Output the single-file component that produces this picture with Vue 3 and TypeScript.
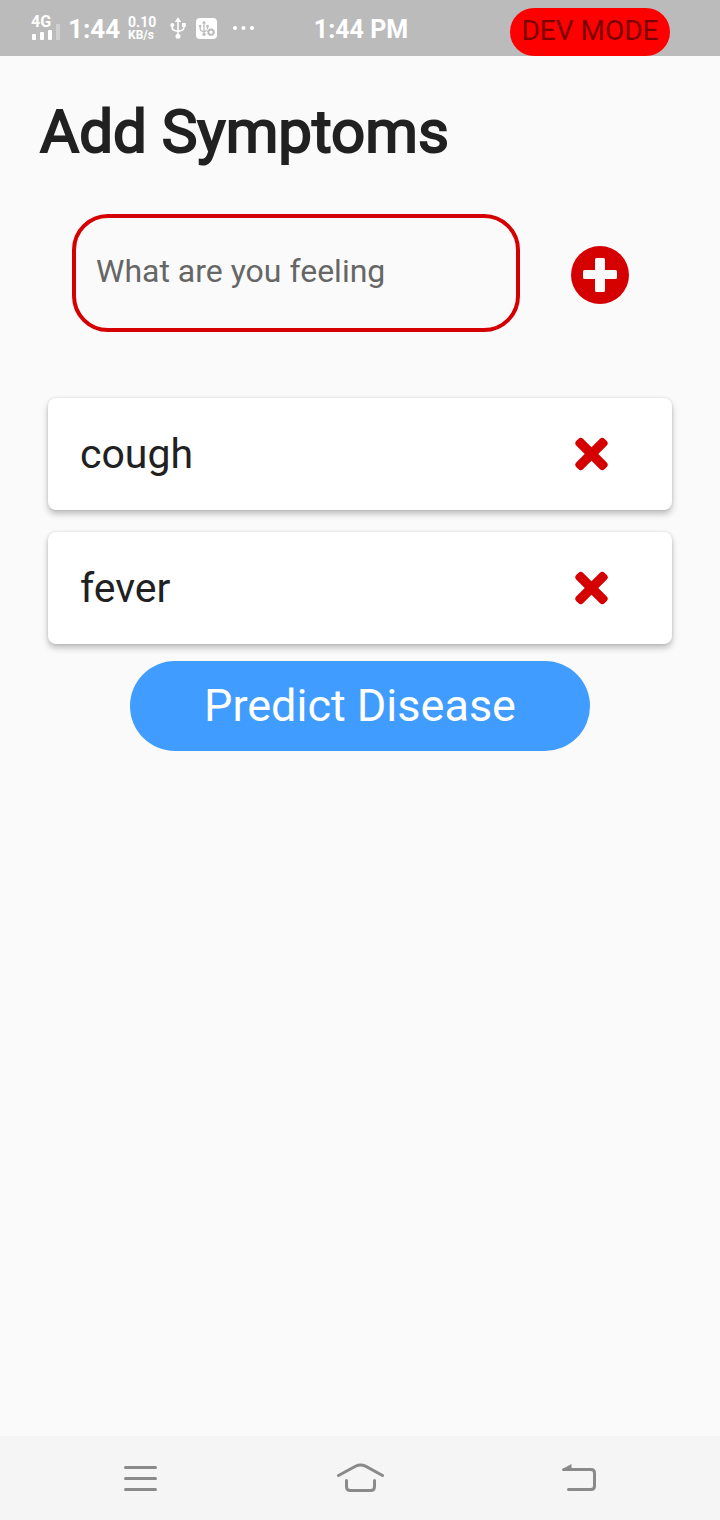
<script setup lang="ts">
import { ref } from 'vue'

const draft = ref('')
const symptoms = ref<string[]>(['cough', 'fever'])

function addSymptom(): void {
  const value = draft.value.trim()
  if (value) {
    symptoms.value.push(value)
    draft.value = ''
  }
}

function removeSymptom(index: number): void {
  symptoms.value.splice(index, 1)
}
</script>

<template>
  <div class="screen">
    <header class="status">
      <div class="status-left">
        <div class="signal">
          <span class="network">4G</span>
          <svg width="29" height="11" viewBox="0 0 29 11" fill="#fff" aria-hidden="true">
            <rect x="1" y="5" width="4" height="6" rx="1" />
            <rect x="9" y="3" width="4" height="8" rx="1" />
            <rect x="17" y="1" width="4" height="10" rx="1" />
          </svg>
          <span class="weak-bar"></span>
        </div>
        <span class="clock">1:44</span>
        <div class="rate"><span>0.10</span><span class="unit">KB/s</span></div>
        <svg class="usb" width="16" height="22" viewBox="0 0 16 22" fill="none" stroke="#fff" stroke-width="1.6" aria-hidden="true">
          <path d="M8 4V19M2.200 8v2.500q0 2.500 2.500 3L8 14.500l3.300-1q2.500-.5 2.500-3V8" />
          <path d="M8 0l3.200 5H4.800z" fill="#fff" stroke="none" />
          <circle cx="2.300" cy="8" r="2" fill="#fff" stroke="none" />
          <path d="M12 6h3.800v4H12z" fill="#fff" stroke="none" />
          <circle cx="8" cy="19.200" r="2.500" fill="#fff" stroke="none" />
        </svg>
        <svg class="usb-box" width="21" height="21" viewBox="0 0 21 21" fill="none" aria-hidden="true">
          <rect width="21" height="21" rx="4" fill="#fff" />
          <g stroke="#bbb" stroke-width="1.300">
            <path d="M8 4v12.500M4.200 8v3q0 1.500 1.500 2L8 13.800l2-.8q1.500-.5 1.500-2V8" />
            <path d="M8 2.500l2 3H6z" fill="#bbb" stroke="none" />
            <circle cx="4.200" cy="8" r="1.200" fill="#bbb" stroke="none" />
            <path d="M10.400 6.800h2.300v2.400h-2.300z" fill="#bbb" stroke="none" />
            <circle cx="8" cy="16.300" r="1.600" fill="#bbb" stroke="none" />
            <circle cx="15" cy="14.200" r="4.600" fill="#fff" stroke="none" />
            <circle cx="15" cy="14.200" r="2.500" stroke-width="1.800" />
            <circle cx="15" cy="14.200" r="3.600" stroke-width="1" stroke-dasharray="1.400 1.427" />
          </g>
        </svg>
        <svg class="dots" width="22" height="4" viewBox="0 0 22 4" fill="#fff" aria-hidden="true">
          <circle cx="2" cy="2" r="2" />
          <circle cx="10.500" cy="2" r="2" />
          <circle cx="19" cy="2" r="2" />
        </svg>
      </div>
      <span class="time">1:44 PM</span>
      <div class="status-right"><span class="dev">DEV MODE</span></div>
    </header>

    <main class="content">
      <h1>Add Symptoms</h1>
      <form class="entry" @submit.prevent="addSymptom">
        <input v-model="draft" type="text" placeholder="What are you feeling" aria-label="What are you feeling" />
        <button class="add" type="submit" aria-label="Add symptom">
          <svg width="58" height="58" viewBox="0 0 58 58" aria-hidden="true">
            <circle cx="29" cy="29" r="29" fill="#d50000" />
            <path d="M25.500 12h7q1.500 0 1.500 1.500V24h10.500q1.500 0 1.500 1.500v6q0 1.500-1.500 1.500H34v11.500q0 1.500-1.500 1.500h-7q-1.500 0-1.500-1.500V33H13.500q-1.500 0-1.500-1.500v-6q0-1.500 1.500-1.500H24V13.500q0-1.500 1.500-1.500z" fill="#fafafa" />
          </svg>
        </button>
      </form>

      <ul class="list">
        <li v-for="(symptom, index) in symptoms" :key="index" class="card">
          <span>{{ symptom }}</span>
          <button class="remove" type="button" :aria-label="`Remove ${symptom}`" @click="removeSymptom(index)">
            <svg width="34" height="34" viewBox="0 0 34 34" fill="#d50000" aria-hidden="true">
              <g transform="rotate(45 16.500 17)">
                <rect x="-3.500" y="12.200" width="40" height="9.600" rx="3.500" />
                <rect x="11.700" y="-3" width="9.600" height="40" rx="3.500" />
              </g>
            </svg>
          </button>
        </li>
      </ul>
      <button class="predict" type="button">Predict Disease</button>
    </main>

    <nav class="nav" aria-label="System navigation">
      <button type="button" aria-label="Recent apps">
        <svg width="48" height="32" viewBox="0 0 48 32" fill="none" stroke="#8a8a8a" stroke-width="3" stroke-linecap="round" aria-hidden="true">
          <path d="M9.500 5.500h30M9.500 16.500h30M9.500 27.500h30" />
        </svg>
      </button>
      <button type="button" aria-label="Home">
        <svg width="48" height="32" viewBox="0 0 48 32" fill="none" stroke="#8a8a8a" stroke-width="3" stroke-linecap="round" aria-hidden="true">
          <path d="M2.500 13.500L19.500 4.200q5-2.600 10 0l17 9.300M10.500 18.500v6q0 4 4 4h20q4 0 4-4v-6" />
        </svg>
      </button>
      <button type="button" aria-label="Back">
        <svg width="48" height="32" viewBox="0 0 48 32" fill="none" stroke="#8a8a8a" stroke-width="3" stroke-linecap="round" aria-hidden="true">
          <path d="M8 7.500h27q3.500 0 3.500 3.500v13q0 3.500-3.500 3.500H12.500" />
          <path d="M6 8.500v-1.300L15.500 2v6z" fill="#8a8a8a" stroke="none" />
        </svg>
      </button>
    </nav>
  </div>
</template>

<style>
body {
  margin: 0;
  background: #fafafa;
}
</style>

<style scoped>
.screen {
  display: flex;
  flex-direction: column;
  min-height: 100vh;
  background: #fafafa;
  color: #212121;
  font-family: Roboto, "Liberation Sans", sans-serif;
}

button {
  padding: 0;
  border: 0;
  background: none;
  font: inherit;
  cursor: pointer;
}

svg {
  display: block;
}

.status {
  display: grid;
  grid-template-columns: 1fr auto 1fr;
  align-items: center;
  height: 56px;
  background: #bbb;
  color: #fff;
}

.status-left {
  display: flex;
  align-items: center;
  padding-left: 31px;
}

.signal {
  position: relative;
  width: 29px;
  padding-bottom: 2px;
}

.network {
  display: block;
  font-size: 16px;
  line-height: 14px;
  font-weight: 700;
}

.weak-bar {
  position: absolute;
  right: 0;
  bottom: 2px;
  width: 4px;
  height: 16px;
  border-radius: 1px;
  background: #d0d0d0;
}

.clock,
.time {
  line-height: 32px;
  font-weight: 700;
  padding-top: 2px;
}

.clock {
  margin-left: 8px;
  font-size: 26px;
}

.time {
  padding-left: 2px;
  padding-top: 4px;
  font-size: 25px;
}

.rate {
  display: flex;
  flex-direction: column;
  width: 29px;
  margin-left: 8px;
  padding-top: 2px;
  font-size: 14px;
  line-height: 13px;
  font-weight: 700;
}

.unit {
  font-size: 12px;
}

.usb {
  margin-left: 13px;
}

.usb-box {
  margin-left: 10px;
}

.dots {
  margin-left: 16px;
}

.status-right {
  display: flex;
  justify-content: flex-end;
  align-self: end;
  padding-right: 50px;
}

.dev {
  width: 160px;
  border-radius: 24px;
  background: #f00;
  color: #7a0000;
  font-size: 28px;
  line-height: 46px;
  padding-bottom: 2px;
  text-align: center;
  white-space: nowrap;
}

.content {
  display: flex;
  flex: 1;
  flex-direction: column;
}

h1 {
  margin: 40px 40px 0;
  font-size: 60px;
  line-height: 72px;
  font-weight: 400;
  -webkit-text-stroke: 2px #212121;
}

.entry {
  display: flex;
  align-items: center;
  margin: 46px 40px 0 72px;
}

input {
  flex: 1;
  min-width: 0;
  height: 118px;
  box-sizing: border-box;
  padding: 0 20px 4px;
  border: 4px solid #d50000;
  border-radius: 36px;
  outline: 0;
  background: transparent;
  color: #212121;
  font: 32px/38px Roboto, "Liberation Sans", sans-serif;
}

input::placeholder {
  color: #666;
  opacity: 1;
}

.add {
  display: flex;
  justify-content: center;
  width: 160px;
  padding-top: 4px;
}

.list {
  display: flex;
  flex-direction: column;
  gap: 22px;
  margin: 66px 48px 0;
  padding: 0;
  list-style: none;
}

.card {
  display: flex;
  align-items: center;
  justify-content: space-between;
  height: 112px;
  padding: 0 63px 0 32px;
  box-sizing: border-box;
  border-radius: 8px;
  background: #fff;
  box-shadow: 0 4px 6px rgba(0, 0, 0, 0.24), 0 0 3px rgba(0, 0, 0, 0.12);
  font-size: 41px;
  line-height: 48px;
}

.predict {
  align-self: center;
  width: 64%;
  height: 90px;
  margin-top: 17px;
  border-radius: 45px;
  background: #409cff;
  color: #fff;
  font-size: 45px;
  line-height: 54px;
}

.nav {
  display: flex;
  justify-content: space-around;
  align-items: center;
  height: 84px;
  padding: 0 30px;
  background: #f5f5f5;
}
</style>
